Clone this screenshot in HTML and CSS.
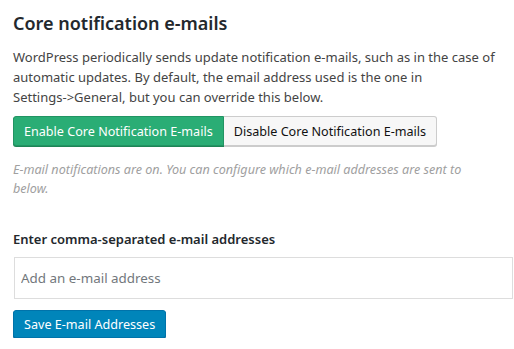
FILE: index.html
```html
<!DOCTYPE html>
<html lang="en">
<head>
    <meta charset="UTF-8">
    <meta name="viewport" content="width=device-width, initial-scale=1.0">
    <title>Core notification e-mails</title>
    <link rel="stylesheet" href="styles.css">
</head>
<body>
    <div class="panel">
        <h2 class="title">Core notification e-mails</h2>
        <p class="intro">WordPress periodically sends update notification e-mails, such as in the case of automatic updates. By default, the email address used is the one in <span class="nowrap">Settings-&gt;General,</span> but you can override this below.</p>

        <div class="toggle">
            <button class="toggle-btn active">Enable Core Notification E-mails</button>
            <button class="toggle-btn">Disable Core Notification E-mails</button>
        </div>

        <p class="note">E-mail notifications are on. You can configure which e-mail addresses are sent to below.</p>

        <label class="field-label" for="emails">Enter comma-separated e-mail addresses</label>
        <input class="field" id="emails" type="text" placeholder="Add an e-mail address">

        <button class="save">Save E-mail Addresses</button>
    </div>
</body>
</html>
```

FILE: styles.css
```css
/* Page de base */
body {
    margin: 0;
    background: #fff;
    font-family: "Noto Sans", "Open Sans", sans-serif;
    font-size: 13px;
    color: #444;
}

.panel {
    padding: 11px 1px 0 13px;
}

.nowrap {
    white-space: nowrap;
}

/* Titre */
.title {
    margin: 0;
    font-size: 18px;
    font-weight: 600;
    line-height: 24px;
    color: #23282d;
}

.intro {
    margin: 12px 0 0;
    line-height: 20px;
}

/* Boutons on / off */
.toggle {
    display: flex;
    margin-top: 9px;
}

.toggle-btn {
    height: 30px;
    padding: 0 10px;
    font-family: inherit;
    font-size: 12.6px;
    color: #111;
    background: #f7f7f7;
    border: 1px solid #ccc;
    border-left: none;
    border-radius: 0 3px 3px 0;
    box-shadow: 0 1px 0 #ccc;
}

.toggle-btn.active {
    color: #fff;
    background: #2aad75;
    border: 1px solid #229463;
    border-radius: 3px 0 0 3px;
    box-shadow: 0 1px 0 #1d8556;
}

.note {
    max-width: 480px;
    margin: 14px 0 0;
    font-size: 12.6px;
    font-style: italic;
    line-height: 19px;
    color: #a0a0a0;
}

/* Champ e-mails */
.field-label {
    display: block;
    margin-top: 31px;
    font-weight: 600;
    line-height: 20px;
    color: #23282d;
}

.field {
    display: block;
    box-sizing: border-box;
    width: calc(100% - 1px);
    height: 42px;
    margin: 8px 0 0 1px;
    padding: 0 6px;
    font-family: inherit;
    font-size: 13.4px;
    border: 1px solid #ddd;
    outline: none;
}

.field::placeholder {
    color: #72777c;
}

/* Bouton bleu */
.save {
    display: block;
    height: 28px;
    margin-top: 11px;
    padding: 0 10px;
    font-family: inherit;
    font-size: 12.6px;
    color: #fff;
    background: #0085ba;
    border: 1px solid #0073aa;
    border-radius: 3px;
    box-shadow: 0 1px 0 #006799;
}
```
